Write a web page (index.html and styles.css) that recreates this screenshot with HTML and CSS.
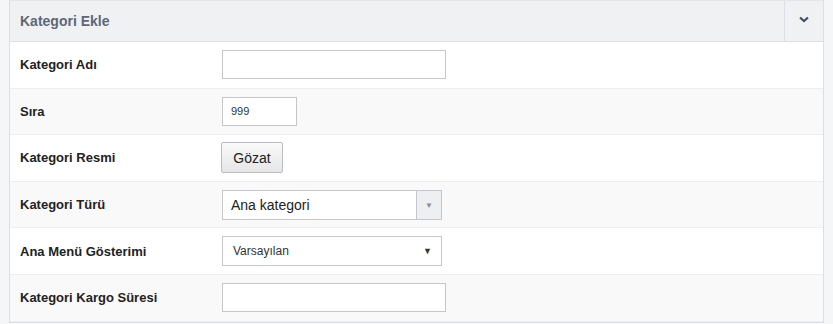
FILE: index.html
```html
<!DOCTYPE html>
<html>
<head>
  <title>Kategori Ekle</title>
  <meta name="viewport" content="width=device-width, initial-scale=1.0">
  <link rel="stylesheet" href="styles.css">
</head>
<body>
  <div class="panel">
    <div class="panel-head">
      <h3>Kategori Ekle</h3>
      <button type="button" class="collapse">
        <svg width="10" height="7" viewBox="0 0 10 7"><path d="M1 1.5 L5 5 L9 1.5" fill="none" stroke="#3d4e66" stroke-width="2.2"/></svg>
      </button>
    </div>
    <form class="panel-body">
      <div class="row">
        <label>Kategori Adı</label>
        <div><input type="text" class="text-input"></div>
      </div>
      <div class="row">
        <label>Sıra</label>
        <div><input type="text" class="text-input small" value="999"></div>
      </div>
      <div class="row">
        <label>Kategori Resmi</label>
        <div><button type="button" class="file-btn">Gözat</button></div>
      </div>
      <div class="row">
        <label>Kategori Türü</label>
        <div>
          <div class="combo">
            <span class="combo-text">Ana kategori</span>
            <span class="combo-arrow">&#9660;</span>
          </div>
        </div>
      </div>
      <div class="row">
        <label>Ana Menü Gösterimi</label>
        <div>
          <div class="plain-select">
            <span>Varsayılan</span>
            <span class="caret">&#9660;</span>
          </div>
        </div>
      </div>
      <div class="row">
        <label>Kategori Kargo Süresi</label>
        <div><input type="text" class="text-input"></div>
      </div>
    </form>
  </div>
</body>
</html>
```
FILE: styles.css
```css
* {
  box-sizing: border-box;
}

body {
  margin: 0;
  padding: 0 9px;
  background-color: #f5f6f8;
  font-family: "Liberation Sans", Arial, sans-serif;
  color: #333;
}

.panel {
  width: 815px;
  border: 1px solid #dcdfe3;
  border-top-color: #e3e5e8;
  background: #fff;
}

.panel-head {
  display: flex;
  align-items: stretch;
  height: 41px;
  background-color: #f0f1f3;
  border-bottom: 1px solid #dcdfe3;
}

.panel-head h3 {
  flex: 1;
  margin: 0;
  padding: 12px 10px 0;
  font-size: 14px;
  font-weight: bold;
  color: #5c6878;
}

.collapse {
  width: 39px;
  border: none;
  border-left: 1px solid #dde1e6;
  background: transparent;
  padding: 0;
  display: flex;
  align-items: center;
  justify-content: center;
  padding-bottom: 3px;
}

.row {
  display: grid;
  grid-template-columns: 202px 1fr;
  align-items: center;
  height: 46.6px;
  padding: 0 10px;
  border-bottom: 1px solid #eceef0;
}

.row:nth-child(even) {
  background-color: #f9f9f9;
}

.row label {
  font-size: 13px;
  font-weight: bold;
  color: #222;
}

.text-input {
  display: block;
  width: 224px;
  height: 29px;
  border: 1px solid #c3c7cc;
  background: #fff;
  font-family: inherit;
  padding: 0 8px;
}

.text-input.small {
  width: 75px;
  font-size: 11px;
  color: #2c3440;
}

.file-btn {
  display: block;
  height: 31px;
  width: 62px;
  margin-left: -1px;
  border: 1px solid #b9bdc2;
  border-radius: 2px;
  background: linear-gradient(#fafafa, #e6e6e6);
  font-family: inherit;
  font-size: 14px;
  color: #222;
  padding: 0;
}

.combo {
  display: flex;
  width: 220px;
  height: 30px;
  border: 1px solid #c3c7cc;
  background: #fff;
}

.combo-text {
  flex: 1;
  padding: 6px 0 0 8px;
  font-size: 14px;
  color: #222;
}

.combo-arrow {
  width: 25px;
  border-left: 1px solid #c3c7cc;
  background: #eeeff1;
  color: #8a8d92;
  font-size: 8px;
  text-align: center;
  padding-top: 10px;
}

.plain-select {
  display: flex;
  justify-content: space-between;
  align-items: center;
  width: 220px;
  height: 30px;
  border: 1px solid #c3c7cc;
  background: #fff;
  padding: 0 9px 0 10px;
  font-size: 12px;
  color: #333;
}

.plain-select .caret {
  font-size: 9px;
  color: #333;
}
```
